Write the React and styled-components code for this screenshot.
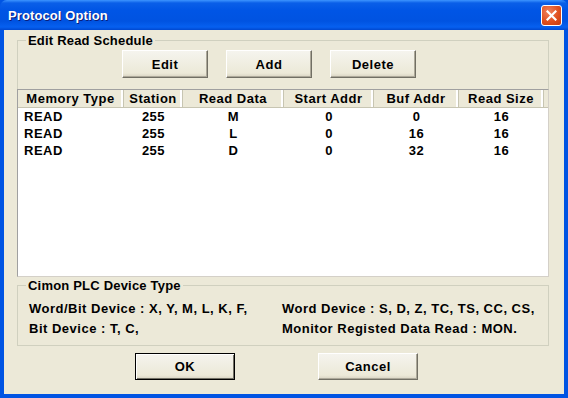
import styled, { createGlobalStyle } from "styled-components";

const Global = createGlobalStyle`
    html, body {
        margin: 0;
        padding: 0;
        background: #ece9d8;
    }
    * {
        box-sizing: border-box;
    }
`

const columns = [
    { title: "Memory Type", width: 106, align: "left" },
    { title: "Station", width: 59 },
    { title: "Read Data", width: 101 },
    { title: "Start Addr", width: 90 },
    { title: "Buf Addr", width: 85 },
    { title: "Read Size", width: 85 },
]

const rows = [
    ["READ", "255", "M", "0", "0", "16"],
    ["READ", "255", "L", "0", "16", "16"],
    ["READ", "255", "D", "0", "32", "16"],
]

export default function App() {
    return (
        <Window>
            <Global />
            <TitleBar>
                <Title>Protocol Option</Title>
                <CloseButton>
                    <svg width="11" height="11" viewBox="0 0 11 11">
                        <path d="M1.5 1.5 L9.5 9.5 M9.5 1.5 L1.5 9.5" stroke="#fff" strokeWidth="2.2" strokeLinecap="square" />
                    </svg>
                </CloseButton>
            </TitleBar>
            <Body>
                <Group>
                    <Legend>Edit Read Schedule</Legend>
                    <ButtonRow>
                        <Button>Edit</Button>
                        <Button>Add</Button>
                        <Button>Delete</Button>
                    </ButtonRow>
                    <ListView>
                        <HeaderRow>
                            {columns.map((c) => (
                                <HeaderCell key={c.title} $w={c.width}>{c.title}</HeaderCell>
                            ))}
                            <HeaderFill />
                        </HeaderRow>
                        {rows.map((r, i) => (
                            <Row key={i}>
                                {r.map((v, j) => (
                                    <Cell key={j} $w={columns[j].width} $align={columns[j].align}>{v}</Cell>
                                ))}
                            </Row>
                        ))}
                    </ListView>
                </Group>
                <InfoGroup>
                    <Legend>Cimon PLC Device Type</Legend>
                    <InfoGrid>
                        <span>Word/Bit Device : X, Y, M, L, K, F,</span>
                        <span>Word Device : S, D, Z, TC, TS, CC, CS,</span>
                        <span>Bit Device : T, C,</span>
                        <span>Monitor Registed Data Read : MON.</span>
                    </InfoGrid>
                </InfoGroup>
                <Footer>
                    <DialogButton $default>OK</DialogButton>
                    <DialogButton>Cancel</DialogButton>
                </Footer>
            </Body>
        </Window>
    )
}

const Window = styled.div`
    width: 568px;
    height: 398px;
    display: flex;
    flex-direction: column;
    background: #0054e3;
    font-family: "Liberation Sans", Arial, sans-serif;
    font-weight: bold;
    font-size: 13px;
    letter-spacing: 0.5px;
    color: #000;
`

const TitleBar = styled.div`
    height: 30px;
    flex: none;
    display: flex;
    align-items: center;
    justify-content: space-between;
    padding: 0 6px 0 8px;
    background: linear-gradient(to bottom, #3d95ff 0%, #0a5fe8 10%, #0055e5 35%, #0053e1 70%, #0660f0 90%, #0048d0 100%);
    border-radius: 7px 7px 0 0;
`

const Title = styled.div`
    color: #fff;
    font-size: 13px;
    letter-spacing: 0.1px;
    text-shadow: 1px 1px 0 #0a1e7a;
`

const CloseButton = styled.div`
    width: 21px;
    height: 21px;
    display: flex;
    align-items: center;
    justify-content: center;
    border: 1px solid #fff;
    border-radius: 3px;
    background: radial-gradient(circle at 35% 30%, #f0825e 0%, #e0501f 55%, #c53a10 100%);
`

const Body = styled.div`
    flex: 1;
    display: flex;
    flex-direction: column;
    background: #ece9d8;
    margin: 0 4px 4px;
    padding: 10px 15px 0 13px;
`

const Group = styled.div`
    position: relative;
    border: 1px solid #d0d0bf;
    border-bottom: none;
    padding-top: 9px;
`

const Legend = styled.span`
    position: absolute;
    top: -8px;
    left: 8px;
    padding: 0 2px;
    background: #ece9d8;
    line-height: 15px;
    letter-spacing: 0.2px;
`

const ButtonRow = styled.div`
    display: flex;
    gap: 18px;
    padding-left: 104px;
`

const Button = styled.button`
    width: 86px;
    height: 28px;
    font: inherit;
    letter-spacing: inherit;
    color: #000;
    border: 1px solid;
    border-color: #fff #716f64 #716f64 #fff;
    box-shadow: inset -1px -1px 0 #aca899;
    background: linear-gradient(to bottom, #f5f4ee, #ece9d8 85%, #d8d3c2);
    padding: 0;
`

const ListView = styled.div`
    margin: 11px -1px 0;
    height: 188px;
    background: #fff;
    border: 1px solid;
    border-color: #a0a0a0 #d4d0c8 #d4d0c8 #a0a0a0;
`

const HeaderRow = styled.div`
    display: flex;
    height: 18px;
    background: #ece9d8;
    border-bottom: 1px solid #c7c5b2;
`

const HeaderCell = styled.div`
    width: ${(p) => p.$w}px;
    flex: none;
    text-align: center;
    line-height: 17px;
    border-right: 1px solid #c7c5b2;
    box-shadow: inset -2px 0 0 #fff;
    white-space: nowrap;
`

const HeaderFill = styled.div`
    flex: 1;
`

const Row = styled.div`
    display: flex;
    height: 17px;
    line-height: 17px;
`

const Cell = styled.div`
    width: ${(p) => p.$w}px;
    flex: none;
    text-align: ${(p) => p.$align || "center"};
    padding-left: ${(p) => (p.$align === "left" ? "6px" : "0")};
`

const InfoGroup = styled.div`
    position: relative;
    margin-top: 8px;
    height: 61px;
    border: 1px solid #d0d0bf;
    padding: 15px 0 0 11px;
`

const InfoGrid = styled.div`
    display: grid;
    grid-template-columns: 253px 1fr;
    row-gap: 4px;
    line-height: 16px;
    white-space: nowrap;
`

const Footer = styled.div`
    display: flex;
    gap: 83px;
    padding: 7px 0 0 118px;
`

const DialogButton = styled.button`
    width: 100px;
    height: 27px;
    font: inherit;
    letter-spacing: inherit;
    color: #000;
    padding: 0;
    border: 1px solid;
    border-color: ${(p) => (p.$default ? "#000" : "#fff #716f64 #716f64 #fff")};
    box-shadow: ${(p) => (p.$default ? "inset 1px 1px 0 #fff, inset -1px -1px 0 #716f64" : "inset -1px -1px 0 #aca899")};
    background: linear-gradient(to bottom, #f5f4ee, #ece9d8 85%, #d8d3c2);
`
